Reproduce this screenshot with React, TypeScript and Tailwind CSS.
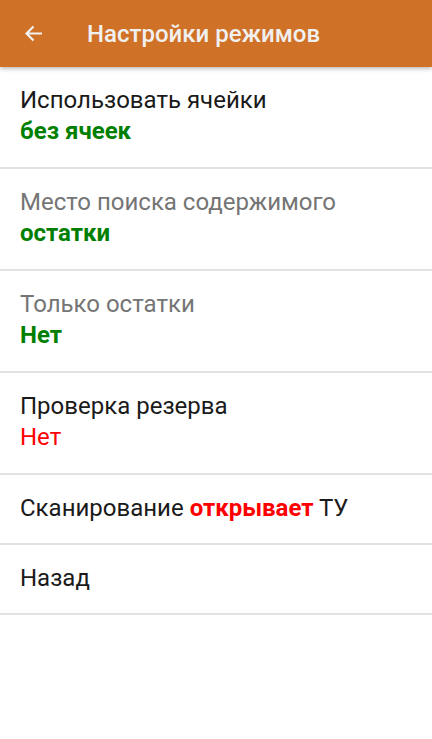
import React from "react";

function Row({ children, tall }: { children: React.ReactNode; tall?: boolean }) {
  return (
    <div
      className={`${tall ? "h-[102px]" : "h-[70px]"} border-b-2 border-[#e2e2e2] pl-5 pt-[18px] text-[24px] leading-[31px]`}
    >
      {children}
    </div>
  );
}

export default function App() {
  return (
    <div
      className="relative min-h-[739px] w-[432px] bg-white"
      style={{ fontFamily: "Roboto, 'Noto Sans', sans-serif" }}
    >
      <div className="relative z-10 flex h-[67px] items-center bg-[#d07128] shadow-[0_2px_4px_rgba(0,0,0,0.25)]">
        <div className="flex w-[87px] items-center pl-6">
          <svg width="19" height="17" viewBox="0 0 19 17" fill="none">
            <path d="M18 8.5H2.5M9.5 1.5L2.5 8.5L9.5 15.5" stroke="#f2f2f2" strokeWidth="2.2" />
          </svg>
        </div>
        <div className="text-[24px] font-medium text-[#f0f0f0]">Настройки режимов</div>
      </div>
      <Row tall>
        <div className="text-[#1a1a1a]">Использовать ячейки</div>
        <div className="font-bold text-[#007f00]">без ячеек</div>
      </Row>
      <Row tall>
        <div className="text-[#757575]">Место поиска содержимого</div>
        <div className="font-bold text-[#007f00]">остатки</div>
      </Row>
      <Row tall>
        <div className="text-[#757575]">Только остатки</div>
        <div className="font-bold text-[#007f00]">Нет</div>
      </Row>
      <Row tall>
        <div className="text-[#1a1a1a]">Проверка резерва</div>
        <div className="text-[#ff0000]">Нет</div>
      </Row>
      <Row>
        <div className="text-[#1a1a1a]">
          Сканирование <span className="font-bold text-[#ff0000]">открывает</span> ТУ
        </div>
      </Row>
      <Row>
        <div className="text-[#1a1a1a]">Назад</div>
      </Row>
    </div>
  );
}
